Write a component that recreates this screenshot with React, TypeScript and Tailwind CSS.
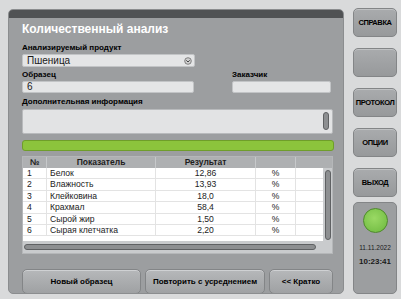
import React from "react"

const rows = [
    ["1", "Белок", "12,86"],
    ["2", "Влажность", "13,93"],
    ["3", "Клейковина", "18,0"],
    ["4", "Крахмал", "58,4"],
    ["5", "Сырой жир", "1,50"],
    ["6", "Сырая клетчатка", "2,20"],
]

export default function App() {
    return (
        <div
            className="w-[401px] h-[299px] bg-[#d9dadb] flex overflow-hidden"
            style={{ fontFamily: '"Liberation Sans", Arial, sans-serif' }}
        >
            <MainPanel />
            <SideBar />
        </div>
    )
}

function MainPanel() {
    return (
        <div className="ml-[8px] mt-[9px] w-[336px] h-[285px] rounded-[5px] bg-[#9c9ea0] border border-[#8b8d8f] flex flex-col overflow-hidden">
            <div className="h-[8px] bg-[#505254] shrink-0"></div>

            <div className="pl-[13px] pr-[10px] flex flex-col">
                <div className="mt-[4px] h-[14px] leading-[14px] text-[12px] font-bold text-white">
                    Количественный анализ
                </div>

                <Label className="mt-[7px]">Анализируемый продукт</Label>
                <div className="mt-[2px] w-[173px] h-[13px] bg-[#e4e5e6] border border-[#c2c4c6] rounded-[2px] flex items-center justify-between pl-[4px] pr-[2px]">
                    <span className="text-[10px] leading-[10px] text-[#1a1a1a]">Пшеница</span>
                    <svg width="8" height="8" viewBox="0 0 8 8">
                        <circle cx="4" cy="4" r="3.3" fill="#d0d0d0" stroke="#6a6a6a" strokeWidth="0.8" />
                        <path d="M2.3 3.3 L4 5 L5.7 3.3" fill="none" stroke="#333" strokeWidth="0.9" />
                    </svg>
                </div>

                <div className="mt-[3px] flex gap-[38px]">
                    <div className="flex flex-col">
                        <Label>Образец</Label>
                        <Field className="w-[172px]">6</Field>
                    </div>
                    <div className="flex flex-col">
                        <Label>Заказчик</Label>
                        <Field className="w-[99px]"></Field>
                    </div>
                </div>

                <Label className="mt-[4px]">Дополнительная информация</Label>
                <div className="mt-[3px] w-[311px] h-[25px] bg-[#e2e3e4] border border-[#b8babc] rounded-[2px] flex justify-end items-start pt-[2px] pr-[3px]">
                    <div className="w-[6px] h-[18px] rounded-[3px] bg-[#8d8f91] border border-[#5f6163]"></div>
                </div>

                <div className="mt-[6px] w-[312px] h-[11px] rounded-[3px] bg-[#8cc43c] border border-[#6f9e2a]"></div>

                <ResultTable />

                <div className="mt-[15px] flex gap-[4px]">
                    <BottomButton className="w-[119px]">Новый образец</BottomButton>
                    <BottomButton className="w-[120px] text-[#6d6f71]">Повторить с усреднением</BottomButton>
                    <BottomButton className="w-[64px]">&lt;&lt; Кратко</BottomButton>
                </div>
            </div>
        </div>
    )
}

function Label({ children, className = "" }: { children: React.ReactNode; className?: string }) {
    return (
        <div className={`h-[9px] leading-[9px] text-[8px] font-bold text-black ${className}`}>
            {children}
        </div>
    )
}

function Field({ children, className = "" }: { children?: React.ReactNode; className?: string }) {
    return (
        <div className={`mt-[2px] h-[12px] bg-[#e4e5e6] border border-[#c2c4c6] rounded-[2px] pl-[4px] text-[10px] leading-[10px] text-[#1a1a1a] ${className}`}>
            {children}
        </div>
    )
}

function ResultTable() {
    const cols = "grid grid-cols-[24px_109px_100px_40px_27px]"
    return (
        <div className="mt-[5px] w-[311px] h-[98px] bg-white border border-[#b5b7b9] flex flex-col overflow-hidden">
            <div className="grid grid-cols-[24px_109px_100px_40px_27px_9px] h-[11px] bg-[#aeb0b2] text-[8.5px] leading-[11px] font-bold text-[#1e1e1e]">
                <div className="text-center border-r border-[#c6c8ca]">№</div>
                <div className="text-center border-r border-[#c6c8ca]">Показатель</div>
                <div className="text-center border-r border-[#c6c8ca]">Результат</div>
                <div className="border-r border-[#c6c8ca]"></div>
                <div></div>
                <div></div>
            </div>
            <div className="flex h-[73px]">
                <div className="w-[300px] flex flex-col">
                    {rows.map((r) => (
                        <div key={r[0]} className={`${cols} h-[11.4px] border-b border-[#e3e3e3] text-[8.6px] leading-[11px] text-[#222]`}>
                            <div className="pl-[4px] border-r border-[#e3e3e3]">{r[0]}</div>
                            <div className="pl-[3px] border-r border-[#e3e3e3]">{r[1]}</div>
                            <div className="text-center border-r border-[#e3e3e3]">{r[2]}</div>
                            <div className="text-center border-r border-[#e3e3e3]">%</div>
                            <div></div>
                        </div>
                    ))}
                </div>
                <div className="flex-1 bg-[#c9cbcd] flex justify-center pt-[2px]">
                    <div className="w-[6px] h-[70px] rounded-[3px] bg-[#8d8f91] border border-[#5f6163]"></div>
                </div>
            </div>
            <div className="flex-1 bg-[#c9cbcd] flex items-center pl-[1px]">
                <div className="w-[292px] h-[6px] rounded-[3px] bg-[#8d8f91] border border-[#5f6163]"></div>
            </div>
        </div>
    )
}

function BottomButton({ children, className = "" }: { children: React.ReactNode; className?: string }) {
    return (
        <div className={`h-[25px] rounded-[5px] bg-gradient-to-b from-[#b6b8ba] to-[#9fa1a3] border border-[#838587] shadow-[inset_0_1px_0_#cfd1d3] flex items-center justify-center text-[8px] font-bold text-black ${className}`}>
            {children}
        </div>
    )
}

function SideBar() {
    return (
        <div className="ml-[9px] mt-[8px] w-[44px] flex flex-col">
            <SideButton>СПРАВКА</SideButton>
            <SideButton className="mt-[11px]"></SideButton>
            <SideButton className="mt-[11px]">ПРОТОКОЛ</SideButton>
            <SideButton className="mt-[11px]">ОПЦИИ</SideButton>
            <SideButton className="mt-[11px]">ВЫХОД</SideButton>

            <div className="mt-[5px] h-[92px] rounded-[5px] bg-[#9c9ea0] border border-[#838587] flex flex-col items-center">
                <div className="mt-[5px] w-[25px] h-[25px] rounded-full bg-[radial-gradient(circle_at_45%_40%,#9ad964,#6cb83e)] border border-[#4f8a2c]"></div>
                <div className="mt-[11px] text-[6.5px] leading-[7px] text-[#1a1a1a]">11.11.2022</div>
                <div className="mt-[6px] text-[8px] leading-[9px] font-bold text-[#1a1a1a]">10:23:41</div>
            </div>
        </div>
    )
}

function SideButton({ children, className = "" }: { children?: React.ReactNode; className?: string }) {
    return (
        <div className={`h-[29px] rounded-[5px] bg-gradient-to-b from-[#a9abad] to-[#97999b] border border-[#838587] shadow-[inset_0_1px_0_#c0c2c4] flex items-center justify-center text-[7.5px] font-bold tracking-[-0.4px] text-black ${className}`}>
            {children}
        </div>
    )
}
